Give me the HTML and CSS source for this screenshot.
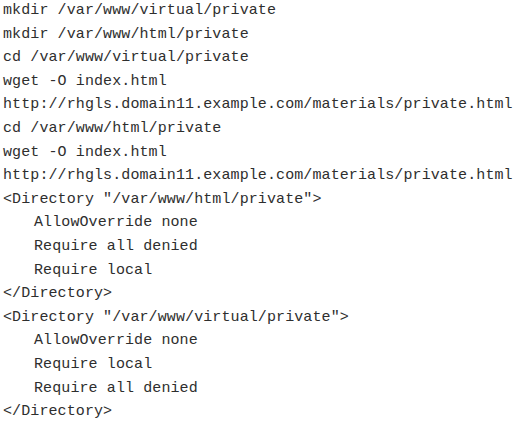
FILE: index.html
```html
<!DOCTYPE html>
<html>
<head>
<meta charset="utf-8">
<link rel="stylesheet" href="styles.css">
</head>
<body>
<div class="code">
  <div class="line">mkdir /var/www/virtual/private</div>
  <div class="line">mkdir /var/www/html/private</div>
  <div class="line">cd /var/www/virtual/private</div>
  <div class="line">wget -O index.html</div>
  <div class="line">http://rhgls.domain11.example.com/materials/private.html</div>
  <div class="line">cd /var/www/html/private</div>
  <div class="line">wget -O index.html</div>
  <div class="line">http://rhgls.domain11.example.com/materials/private.html</div>
  <div class="line">&lt;Directory "/var/www/html/private"&gt;</div>
  <div class="line indent">AllowOverride none</div>
  <div class="line indent">Require all denied</div>
  <div class="line indent">Require local</div>
  <div class="line">&lt;/Directory&gt;</div>
  <div class="line">&lt;Directory "/var/www/virtual/private"&gt;</div>
  <div class="line indent">AllowOverride none</div>
  <div class="line indent">Require local</div>
  <div class="line indent">Require all denied</div>
  <div class="line">&lt;/Directory&gt;</div>
</div>
</body>
</html>
```
FILE: styles.css
```css
html, body {
  margin: 0;
  padding: 0;
  background: #ffffff;
}
.code {
  padding: 0 0 0 3px;
  margin-top: -1px;
  font-family: "Liberation Mono", "Courier New", monospace;
  font-size: 15px;
  letter-spacing: 0.1px;
  line-height: 23.6px;
  color: #2e2e2e;
}
.line {
  white-space: pre;
}
.indent {
  padding-left: 31px;
}
```
